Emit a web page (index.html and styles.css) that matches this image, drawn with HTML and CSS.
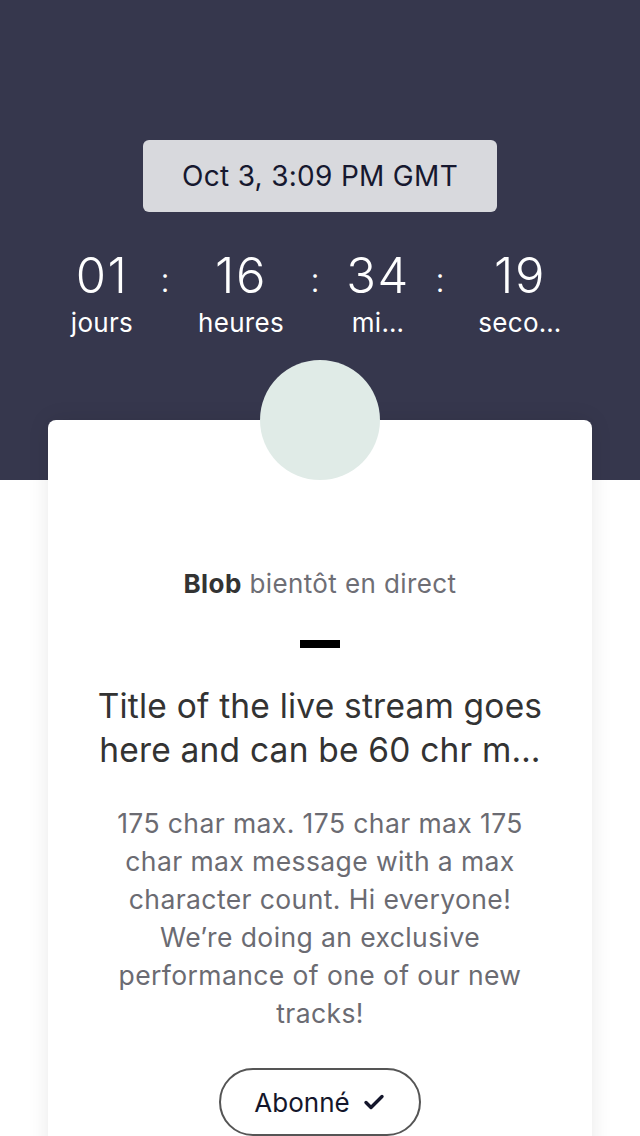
FILE: index.html
```html
<!DOCTYPE html>
<html lang="fr">
<head>
<meta charset="utf-8">
<title>Blob bientôt en direct</title>
<link rel="stylesheet" href="styles.css">
</head>
<body>
<header class="hero">
  <div class="date-pill">Oct 3, 3:09 PM GMT</div>
  <div class="countdown">
    <div class="unit"><span class="num">01</span><span class="lbl">jours</span></div>
    <div class="sep">:</div>
    <div class="unit"><span class="num">16</span><span class="lbl">heures</span></div>
    <div class="sep">:</div>
    <div class="unit"><span class="num">34</span><span class="lbl">mi…</span></div>
    <div class="sep">:</div>
    <div class="unit"><span class="num">19</span><span class="lbl">seco…</span></div>
  </div>
</header>
<main class="card">
  <div class="avatar"></div>
  <p class="host"><strong>Blob</strong> bientôt en direct</p>
  <div class="dash"></div>
  <h1 class="title">Title of the live stream goes<br>here and can be 60 chr m…</h1>
  <p class="desc">175 char max. 175 char max 175 char max message with a max character count. Hi everyone! We’re doing an exclusive performance of one of our new tracks!</p>
  <button class="follow">Abonné
    <svg class="check" viewBox="0 0 24 24" width="24" height="24"><path d="M4 12.5l5 5L20 6.5" fill="none" stroke="#14162b" stroke-width="3.4" stroke-linecap="round" stroke-linejoin="round"/></svg>
  </button>
</main>
</body>
</html>
```
FILE: styles.css
```css
* { box-sizing: border-box; }
body {
  margin: 0;
  background: #ffffff;
  font-family: Inter, "Noto Sans", "Liberation Sans", sans-serif;
  overflow: hidden;
}
.hero {
  height: 480px;
  background: #36374d;
  padding-top: 140px;
  display: flex;
  flex-direction: column;
  align-items: center;
}
.date-pill {
  width: 354px;
  height: 72px;
  background: #d8d9dd;
  border-radius: 6px;
  color: #16182f;
  font-size: 28px;
  letter-spacing: 0.3px;
  display: flex;
  align-items: center;
  justify-content: center;
}
.countdown {
  align-self: stretch;
  display: grid;
  grid-template-columns: 100px 26px 126px 22px 104px 20px 140px;
  padding-left: 52px;
  margin-top: 36px;
  color: #ffffff;
}
.unit {
  display: flex;
  flex-direction: column;
  align-items: center;
}
.num {
  font-size: 49px;
  font-weight: 300;
  line-height: 56px;
  letter-spacing: 1.5px;
}
.lbl {
  font-size: 26px;
  line-height: 30px;
  margin-top: 4px;
  letter-spacing: 0.3px;
}
.sep {
  text-align: center;
  font-size: 34px;
  font-weight: 300;
  line-height: 64px;
}
.card {
  width: 544px;
  margin: -60px auto 0;
  background: #ffffff;
  border-radius: 8px 8px 0 0;
  box-shadow: 0 0 22px rgba(0, 0, 0, 0.09);
  display: flex;
  flex-direction: column;
  align-items: center;
  padding: 0 40px 40px;
  min-height: 720px;
}
.avatar {
  width: 120px;
  height: 120px;
  border-radius: 50%;
  background: #e0ebe7;
  margin-top: -60px;
}
.host {
  margin: 87px 0 0;
  font-size: 26px;
  letter-spacing: 0.4px;
  line-height: 34px;
  color: #6e6e75;
}
.host strong { color: #333333; font-weight: 700; }
.dash {
  width: 40px;
  height: 8px;
  background: #000000;
  margin-top: 39px;
}
.title {
  margin: 36px 0 0;
  font-size: 33.5px;
  font-weight: 400;
  line-height: 44px;
  letter-spacing: 0.2px;
  color: #333333;
  text-align: center;
  white-space: nowrap;
}
.desc {
  margin: 32px 0 0;
  font-size: 26.5px;
  letter-spacing: 0.4px;
  line-height: 38px;
  color: #6b6b72;
  text-align: center;
  width: 440px;
}
.follow {
  margin-top: 36px;
  width: 202px;
  height: 68px;
  border: 2px solid #555555;
  border-radius: 34px;
  background: #ffffff;
  font-family: inherit;
  font-size: 26px;
  color: #14162b;
  display: flex;
  align-items: center;
  justify-content: center;
  gap: 12px;
  padding: 0;
}
.check { display: block; }
```
